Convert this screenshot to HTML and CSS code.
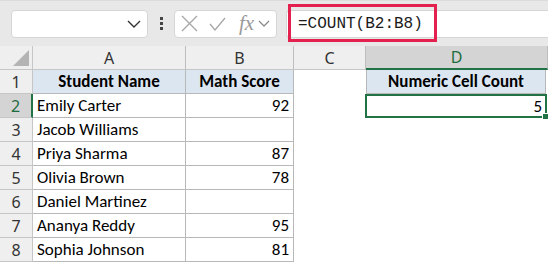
FILE: index.html
```html
<!DOCTYPE html>
<html lang="en">
<head>
    <meta charset="UTF-8">
    <title>COUNT example</title>
    <link rel="stylesheet" href="styles.css">
</head>
<body>
    <!-- formula bar -->
    <div class="toolbar">
        <div class="namebox">
            <svg class="chev" width="14" height="8" viewBox="0 0 14 8"><path d="M1 1l6 6 6-6" fill="none" stroke="#333" stroke-width="1.4"/></svg>
        </div>
        <div class="dots"><span></span><span></span><span></span></div>
        <div class="fxbox">
            <svg width="17" height="17" viewBox="0 0 17 17"><path d="M1 1l15 15M16 1L1 16" stroke="#a6a6a6" stroke-width="1.3"/></svg>
            <svg width="17" height="14" viewBox="0 0 17 14"><path d="M1 7l5 6L16 1" fill="none" stroke="#a6a6a6" stroke-width="1.3"/></svg>
            <span class="fx">fx</span>
            <svg width="12" height="7" viewBox="0 0 12 7"><path d="M1 1l5 5 5-5" fill="none" stroke="#8a8a8a" stroke-width="1.3"/></svg>
        </div>
        <div class="formula">=COUNT(B2:B8)</div>
        <div class="highlight"></div>
    </div>

    <!-- sheet -->
    <div class="sheet">
        <div class="corner"><div class="tri"></div></div>
        <div class="colhead">A</div>
        <div class="colhead">B</div>
        <div class="colhead">C</div>
        <div class="colhead active">D</div>

        <div class="rowhead">1</div>
        <div class="cell title">Student Name</div>
        <div class="cell title">Math Score</div>
        <div class="cell blank"></div>
        <div class="cell title dcell">Numeric Cell Count</div>

        <div class="rowhead active">2</div>
        <div class="cell">Emily Carter</div>
        <div class="cell num">92</div>
        <div class="cell blank"></div>
        <div class="cell num selected">5<span class="handle"></span></div>

        <div class="rowhead">3</div>
        <div class="cell">Jacob Williams</div>
        <div class="cell num"></div>
        <div class="cell blank"></div>
        <div class="cell empty"></div>

        <div class="rowhead">4</div>
        <div class="cell">Priya Sharma</div>
        <div class="cell num">87</div>
        <div class="cell blank"></div>
        <div class="cell empty"></div>

        <div class="rowhead">5</div>
        <div class="cell">Olivia Brown</div>
        <div class="cell num">78</div>
        <div class="cell blank"></div>
        <div class="cell empty"></div>

        <div class="rowhead">6</div>
        <div class="cell">Daniel Martinez</div>
        <div class="cell num"></div>
        <div class="cell blank"></div>
        <div class="cell empty"></div>

        <div class="rowhead">7</div>
        <div class="cell">Ananya Reddy</div>
        <div class="cell num">95</div>
        <div class="cell blank"></div>
        <div class="cell empty"></div>

        <div class="rowhead">8</div>
        <div class="cell">Sophia Johnson</div>
        <div class="cell num">81</div>
        <div class="cell blank"></div>
        <div class="cell empty"></div>
    </div>
</body>
</html>
```

FILE: styles.css
```css
body {
    margin: 0;
    width: 548px;
    height: 264px;
    overflow: hidden;
    background: #fff;
    font-family: Carlito, Lato, "Liberation Sans", sans-serif;
    color: #000;
}
/* formula bar */
.toolbar {
    position: relative;
    height: 46px;
    background: #e8e8e8;
    border-top: 1px solid #dcdcdc;
    box-sizing: border-box;
    display: flex;
    align-items: center;
    padding-left: 11px;
}
.namebox {
    width: 137px;
    height: 28px;
    background: #fff;
    border: 1px solid #d6d6d6;
    border-radius: 4px;
    box-sizing: border-box;
    display: flex;
    align-items: center;
    justify-content: flex-end;
    padding-right: 6px;
}
.dots {
    margin-left: 12px;
    width: 3px;
    display: flex;
    flex-direction: column;
    gap: 2px;
}
.dots span {
    width: 3px;
    height: 3px;
    background: #444;
}
.fxbox {
    margin-left: 11px;
    width: 103px;
    height: 28px;
    background: #fff;
    border: 1px solid #d6d6d6;
    border-radius: 4px;
    box-sizing: border-box;
    display: flex;
    align-items: center;
    padding-left: 6px;
    gap: 11px;
}
.fx {
    font-family: "Liberation Serif", serif;
    font-style: italic;
    font-size: 21px;
    color: #9a9a9a;
    margin-left: 2px;
    margin-right: -7px;
}
.formula {
    margin-left: 9px;
    flex: 1;
    height: 28px;
    background: #fff;
    border: 1px solid #d6d6d6;
    border-right: none;
    border-radius: 4px 0 0 4px;
    box-sizing: border-box;
    padding-left: 11px;
    font-family: "Liberation Mono", monospace;
    font-size: 16px;
    line-height: 26px;
    color: #1a1a1a;
}
.highlight {
    position: absolute;
    left: 288px;
    top: 3px;
    width: 149px;
    height: 38px;
    border: 3px solid #e3204e;
    box-sizing: border-box;
}
/* sheet */
.sheet {
    display: grid;
    grid-template-columns: 33px 153px 108px 72px 182px;
    grid-auto-rows: 24px;
}
.sheet > div {
    box-sizing: border-box;
    font-size: 17px;
    display: flex;
    align-items: center;
}
.corner, .colhead, .rowhead {
    background: #efefef;
    color: #333;
    font-family: "Noto Sans", sans-serif;
    font-size: 16px;
    justify-content: center;
    border-right: 1px solid #c6c6c6;
    border-bottom: 1px solid #c6c6c6;
}
.sheet > .corner, .sheet > .colhead, .sheet > .rowhead {
    font-size: 16px;
}
.colhead {
    border-right-color: #bdbdbd;
}
.corner {
    position: relative;
}
.tri {
    position: absolute;
    right: 3px;
    bottom: 3px;
    width: 0;
    height: 0;
    border-left: 16px solid transparent;
    border-bottom: 16px solid #b4b4b4;
}
.colhead.active {
    background: #d4d4d4;
    color: #1e6b3e;
    border-bottom: 2px solid #217346;
}
.rowhead.active {
    background: #d4d4d4;
    color: #1e6b3e;
    border-right: 2px solid #217346;
}
.cell {
    border-right: 1px solid #b8b8b8;
    border-bottom: 1px solid #b8b8b8;
    padding: 0 4px;
    white-space: nowrap;
}
.cell.title {
    background: #dce6f1;
    font-weight: bold;
    justify-content: center;
}
.cell.num {
    justify-content: flex-end;
}
.cell.blank, .cell.empty {
    border: none;
}
.dcell {
    border-left: 1px solid #b8b8b8;
    margin-right: 2px;
}
.selected {
    position: relative;
    border: 2px solid #217346 !important;
    margin-right: 1px;
    margin-left: -1px;
    padding-right: 3px;
}
.handle {
    position: absolute;
    right: -4px;
    bottom: -4px;
    width: 5px;
    height: 5px;
    background: #217346;
    border: 1px solid #fff;
}
```
